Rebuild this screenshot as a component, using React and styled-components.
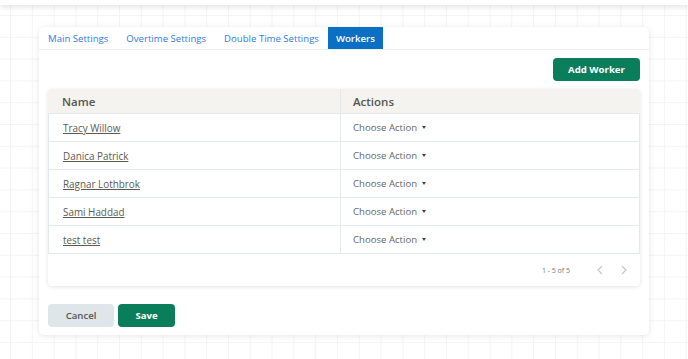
import React from "react";
import styled, { createGlobalStyle } from "styled-components";

const Global = createGlobalStyle`
  html, body { margin: 0; padding: 0; }
  body {
    width: 688px;
    height: 359px;
    overflow: hidden;
    font-family: "Open Sans", "DejaVu Sans", sans-serif;
    background-color: #ffffff;
    background-image:
      linear-gradient(to right, #f2f4f5 1px, transparent 1px),
      linear-gradient(to bottom, #f2f4f5 1px, transparent 1px);
    background-size: 21.8px 21.8px;
    background-position: 10px 15px;
  }
`;

const Page = styled.div`
  display: flex;
  flex-direction: column;
  height: 359px;
`;

const TopBar = styled.div`
  height: 5px;
  background: #fff;
  box-shadow: 0 2px 5px rgba(0, 0, 0, 0.12);
`;

const Card = styled.div`
  margin: 22px 0 0 39px;
  width: 610px;
  height: 308px;
  box-sizing: border-box;
  background: #fff;
  border-radius: 5px;
  box-shadow: 0 1px 6px rgba(0, 0, 0, 0.1);
  display: flex;
  flex-direction: column;
`;

const Tabs = styled.div`
  display: flex;
  align-items: stretch;
  height: 22px;
  border-bottom: 1px solid #eceff1;
`;

const Tab = styled.div`
  display: flex;
  align-items: center;
  padding: 0 ${(p) => (p.$active ? 8 : 9)}px;
  font-size: 9.6px;
  font-weight: ${(p) => (p.$active ? 600 : 500)};
  color: ${(p) => (p.$active ? "#fff" : "#2f7de1")};
  background: ${(p) => (p.$active ? "#0b6fc4" : "transparent")};
  white-space: nowrap;
`;

const Body = styled.div`
  padding: 8px 9px 0 9px;
  display: flex;
  flex-direction: column;
`;

const Toolbar = styled.div`
  display: flex;
  justify-content: flex-end;
`;

const GreenButton = styled.button`
  border: none;
  border-radius: 4px;
  background: #0a7d5a;
  color: #fff;
  font-family: inherit;
  font-weight: 700;
  font-size: 9.6px;
  height: 23px;
  width: ${(p) => p.$w}px;
  padding: 0;
  cursor: pointer;
`;

const GrayButton = styled(GreenButton)`
  background: #dfe6e9;
  color: #555;
  font-weight: 600;
`;

const TableWrap = styled.div`
  margin-top: 8px;
  border-radius: 4px;
  box-shadow: 0 1px 4px rgba(0, 0, 0, 0.12);
  overflow: hidden;
`;

const Grid = styled.div`
  display: grid;
  grid-template-columns: 293px 1fr;
`;

const HeadCell = styled.div`
  height: 24px;
  background: #f4f3ef;
  display: flex;
  align-items: center;
  padding-left: ${(p) => p.$pl}px;
  font-size: 11.5px;
  font-weight: 600;
  color: #55564f;
  border-right: ${(p) => (p.$div ? "1px solid #e3e8ec" : "none")};
  box-sizing: border-box;
`;

const Cell = styled.div`
  height: 28px;
  box-sizing: border-box;
  display: flex;
  align-items: center;
  padding-left: ${(p) => p.$pl}px;
  border-top: 1px solid #e3e9ee;
  border-left: ${(p) => (p.$first ? "1px solid #e3e9ee" : "none")};
  border-right: 1px solid #e3e9ee;
  font-size: 9.6px;
`;

const NameLink = styled.a`
  color: #5a5a52;
  text-decoration: underline;
  font-size: 9.9px;
  font-weight: 500;
`;

const Choose = styled.span`
  color: #666;
  display: inline-flex;
  align-items: center;
  gap: 5px;
`;

const Caret = styled.span`
  width: 0;
  height: 0;
  border-left: 2.5px solid transparent;
  border-right: 2.5px solid transparent;
  border-top: 3px solid #444;
`;

const Footer = styled.div`
  height: 32px;
  border-top: 1px solid #e3e9ee;
  display: flex;
  align-items: center;
  justify-content: flex-end;
  padding-right: 6px;
`;

const PageInfo = styled.span`
  font-size: 7px;
  color: #777;
  margin-right: 20px;
`;

const Chev = styled.span`
  display: inline-flex;
  width: 20px;
  justify-content: center;
  margin-left: ${(p) => p.$ml || 0}px;
`;

const Actions = styled.div`
  display: flex;
  gap: 4px;
  margin-top: 18px;
`;

const workers = ["Tracy Willow", "Danica Patrick", "Ragnar Lothbrok", "Sami Haddad", "test test"];

const ChevronIcon = ({ dir }) => (
  <svg width="8" height="10" viewBox="0 0 8 10">
    <path
      d={dir === "left" ? "M6 1 L2 5 L6 9" : "M2 1 L6 5 L2 9"}
      fill="none"
      stroke="#c4c4c4"
      strokeWidth="1.1"
    />
  </svg>
);

export default function App() {
  return (
    <Page>
      <Global />
      <TopBar />
      <Card>
        <Tabs>
          <Tab>Main Settings</Tab>
          <Tab>Overtime Settings</Tab>
          <Tab>Double Time Settings</Tab>
          <Tab $active>Workers</Tab>
        </Tabs>
        <Body>
          <Toolbar>
            <GreenButton $w={87}>Add Worker</GreenButton>
          </Toolbar>
          <TableWrap>
            <Grid>
              <HeadCell $pl={14} $div>Name</HeadCell>
              <HeadCell $pl={12}>Actions</HeadCell>
              {workers.map((w) => (
                <React.Fragment key={w}>
                  <Cell $pl={14} $first>
                    <NameLink>{w}</NameLink>
                  </Cell>
                  <Cell $pl={12}>
                    <Choose>
                      Choose Action <Caret />
                    </Choose>
                  </Cell>
                </React.Fragment>
              ))}
            </Grid>
            <Footer>
              <PageInfo>1 - 5 of 5</PageInfo>
              <Chev><ChevronIcon dir="left" /></Chev>
              <Chev $ml={4}><ChevronIcon dir="right" /></Chev>
            </Footer>
          </TableWrap>
          <Actions>
            <GrayButton $w={66}>Cancel</GrayButton>
            <GreenButton $w={57}>Save</GreenButton>
          </Actions>
        </Body>
      </Card>
    </Page>
  );
}
